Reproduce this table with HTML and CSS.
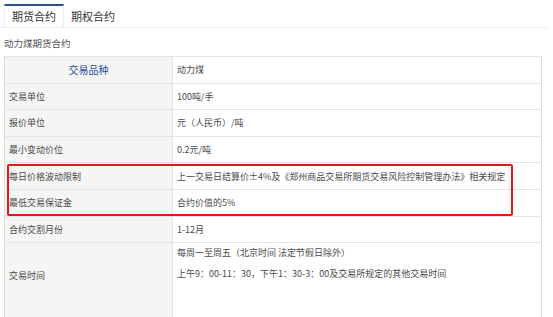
FILE: index.html
```html
<!DOCTYPE html>
<html lang="zh-CN">
<head>
    <meta charset="UTF-8">
    <title>动力煤期货合约</title>
    <link rel="stylesheet" href="styles.css">
</head>
<body>
    <div class="tabs">
        <div class="tab active">期货合约</div>
        <div class="tab">期权合约</div>
    </div>
    <div class="contract-title">动力煤期货合约</div>
    <div class="table-wrap">
        <table class="contract-table">
            <tr class="head-row">
                <td class="label">交易品种</td>
                <td>动力煤</td>
            </tr>
            <tr>
                <td class="label">交易单位</td>
                <td>100吨/手</td>
            </tr>
            <tr>
                <td class="label">报价单位</td>
                <td>元（人民币）/吨</td>
            </tr>
            <tr>
                <td class="label">最小变动价位</td>
                <td>0.2元/吨</td>
            </tr>
            <tr>
                <td class="label">每日价格波动限制</td>
                <td>上一交易日结算价±4%及《郑州商品交易所期货交易风险控制管理办法》相关规定</td>
            </tr>
            <tr>
                <td class="label">最低交易保证金</td>
                <td>合约价值的5%</td>
            </tr>
            <tr>
                <td class="label">合约交割月份</td>
                <td>1-12月</td>
            </tr>
            <tr class="tall-row">
                <td class="label">交易时间</td>
                <td>
                    <p>每周一至周五（北京时间 法定节假日除外）</p>
                    <p>上午9：00-11：30，下午1：30-3：00及交易所规定的其他交易时间</p>
                </td>
            </tr>
            <tr>
                <td class="label">最后交易日</td>
                <td>合约交割月份的第10个交易日</td>
            </tr>
        </table>
        <!-- 重点标注：涨跌停与保证金 -->
        <div class="highlight"></div>
    </div>
</body>
</html>
```

FILE: styles.css
```css
body {
    margin: 0;
    font-family: "Microsoft YaHei", "Noto Sans CJK SC", sans-serif;
    color: #555;
    background: #fff;
}
.tabs {
    display: flex;
    width: 548px;
    margin-top: 4px;
    padding-left: 4px;
    border-bottom: 1px solid #eee;
    box-sizing: border-box;
}
.tab {
    height: 21px;
    line-height: 21px;
    padding: 2px 7px 0;
    font-size: 11px;
    color: #333;
}
.tab.active {
    padding-top: 0;
    border-top: 2px solid #2c4f86;
    border-left: 1px solid #eee;
    border-right: 1px solid #eee;
    margin-bottom: -1px;
    background: #fff;
}
.contract-title {
    font-size: 9.5px;
    line-height: 19px;
    padding: 6px 4px 0;
    height: 22px;
}
.table-wrap {
    position: relative;
    margin-left: 4px;
    width: 538px;
}
.contract-table {
    width: 100%;
    border-collapse: collapse;
    border: 1px solid #ddd;
    font-size: 9px;
}
.contract-table td {
    height: 25.6px;
    padding: 0 4px;
    border: 1px solid #e4e4e4;
    border-width: 1px 0;
    color: #4a4a4a;
}
.contract-table td.label {
    width: 159px;
    background: #f5f5f3;
    border-right: 1px solid #e4e4e4;
}
.contract-table tr:nth-child(even) td {
    border-top-color: #d6d6d6;
}
.head-row td.label {
    text-align: center;
    color: #1f4f9f;
    font-size: 10px;
}
.tall-row td {
    height: 65px;
    vertical-align: top;
    border-bottom: 2px solid #ddd;
}
.tall-row td.label {
    vertical-align: middle;
    padding-bottom: 16px;
}
.tall-row p {
    margin: 0;
    line-height: 21px;
}
.tall-row p:first-child {
    line-height: 20px;
}
.highlight {
    position: absolute;
    left: 3px;
    top: 108px;
    width: 502px;
    height: 48px;
    border: 2px solid #e8161c;
    border-radius: 2px;
}
```
